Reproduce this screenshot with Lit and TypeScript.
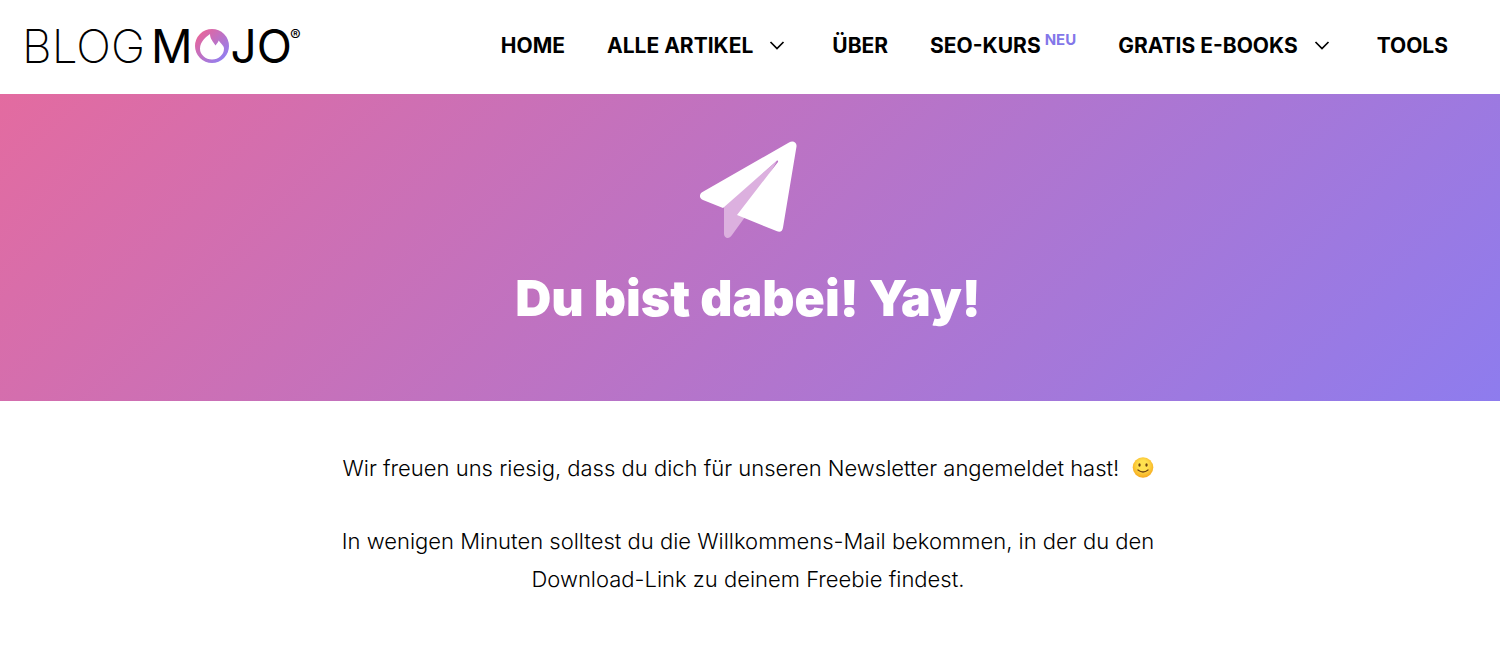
import { LitElement, html, css, svg } from "lit";
import { customElement } from "lit/decorators.js";

interface NavItem {
  label: string;
  badge?: string;
  submenu?: boolean;
}

const NAV: NavItem[] = [
  { label: "HOME" },
  { label: "ALLE ARTIKEL", submenu: true },
  { label: "ÜBER" },
  { label: "SEO-KURS", badge: "NEU" },
  { label: "GRATIS E-BOOKS", submenu: true },
  { label: "TOOLS" },
];

const chevron = html`<svg class="chevron" viewBox="0 0 16 16" aria-hidden="true">
  <path d="M1.500 4 8 10.500 14.500 4" fill="none" stroke="currentColor" stroke-width="1.700" />
</svg>`;

const flame = svg`
  <defs>
    <linearGradient id="flame" x1="0" y1="0" x2="1" y2="1">
      <stop offset="0.100" stop-color="#ea6498" />
      <stop offset="0.900" stop-color="#8f80f4" />
    </linearGradient>
  </defs>
  <path fill="url(#flame)" fill-rule="evenodd"
    d="M17 0a17 17 0 1 1 0 34a17 17 0 1 1 0-34Z
       M15 5C11 8 5 12.500 5 19.500a12 11 0 0 0 24 0C29 17 26 14.500 23.500 11.500C23.500 13 22 14.500 20.500 16.500C18.500 13 15 10 15 5Z" />`;

@customElement("app-root")
export class AppRoot extends LitElement {
  static styles = css`
    :host {
      display: block;
      min-height: 100vh;
      background: #fff;
      color: #000;
      font-family: Inter, "Liberation Sans", sans-serif;
    }
    a {
      color: inherit;
      text-decoration: none;
    }
    .header {
      display: flex;
      align-items: center;
      justify-content: space-between;
      min-height: 94px;
      box-sizing: border-box;
      padding: 0 52px 2px 22px;
    }
    .logo {
      display: flex;
      align-items: center;
      font-size: 46px;
      line-height: 48px;
    }
    .light {
      margin-right: 6px;
      font-weight: 200;
    }
    .medium {
      font-weight: 400;
    }
    .flame {
      width: 34px;
      height: 34px;
      margin: 0 2px;
    }
    .mark {
      align-self: flex-start;
      margin-left: -2px;
      font-size: 16px;
      line-height: 26px;
    }
    .nav {
      display: flex;
      align-items: center;
      gap: 42px;
      font-size: 21px;
      font-weight: 700;
      line-height: 24px;
      white-space: nowrap;
    }
    .item {
      display: flex;
      align-items: center;
    }
    .badge {
      align-self: flex-start;
      margin-left: 4px;
      color: #8377e9;
      font-size: 15px;
      line-height: 12px;
    }
    .chevron {
      width: 16px;
      height: 16px;
      margin: 0 5px 0 16px;
    }
    .hero {
      display: flex;
      flex-direction: column;
      align-items: center;
      padding: 46px 28px 71px 24px;
      background: linear-gradient(135deg, #e36ba0, #8e7cee);
      color: #fff;
    }
    .plane {
      width: 100px;
      height: 100px;
    }
    .title {
      margin: 27px 0 0;
      font-size: 50px;
      font-weight: 900;
      line-height: 63px;
      text-align: center;
    }
    .content {
      padding: 48px 28px 48px 24px;
      font-size: 22px;
      font-weight: 300;
      line-height: 38px;
      text-align: center;
    }
    .content p {
      max-width: 840px;
      margin: 0 auto 35px;
    }
    .smiley {
      width: 22px;
      height: 22px;
      margin-left: 6px;
      vertical-align: -3px;
    }
  `;

  render() {
    return html`
      <header class="header">
        <a class="logo" href="#" aria-label="Blogmojo">
          <span class="light">BLOG</span><span class="medium">M</span>
          <svg class="flame" viewBox="0 0 34 34" aria-hidden="true">${flame}</svg>
          <span class="medium">JO</span><span class="mark">®</span>
        </a>
        <nav class="nav">
          ${NAV.map(
            (item) => html`<a class="item" href="#"
              >${item.label}${item.badge
                ? html`<span class="badge">${item.badge}</span>`
                : ""}${item.submenu ? chevron : ""}</a
            >`
          )}
        </nav>
      </header>
      <main>
        <section class="hero">
          <svg class="plane" viewBox="0 0 100 100" aria-hidden="true">
            <path
              fill="#dcb0df"
              d="M26 66 79 21 47 77 34 95c-3 5-8 3-8-1Z"
            />
            <path
              fill="#fff"
              d="M91 2.500c4-2.500 8 0 7.500 4L85 87.500c-.5 4-3 5-6.500 3.500L39 75 80 22c.5-1-.5-2-1.500-1L25 68 5 60c-4-1.500-4-6-.5-8Z"
            />
          </svg>
          <h1 class="title">Du bist dabei! Yay!</h1>
        </section>
        <section class="content">
          <p>
            Wir freuen uns riesig, dass du dich für unseren Newsletter angemeldet hast!
            <svg class="smiley" viewBox="0 0 22 22" role="img" aria-label="Lächeln">
              <defs>
                <radialGradient id="face" cx="0.500" cy="0.400" r="0.600">
                  <stop offset="0.400" stop-color="#ffe14f" />
                  <stop offset="1" stop-color="#f6a81c" />
                </radialGradient>
              </defs>
              <circle cx="11" cy="10.500" r="10.300" fill="url(#face)" />
              <ellipse cx="7.500" cy="8" rx="1.200" ry="1.700" fill="#704411" />
              <ellipse cx="14.500" cy="8" rx="1.200" ry="1.700" fill="#704411" />
              <path d="M6 13q5 4 10 0" fill="none" stroke="#704411" stroke-width="1.300" stroke-linecap="round" />
            </svg>
          </p>
          <p>
            In wenigen Minuten solltest du die Willkommens-Mail bekommen, in der du den
            Download-Link zu deinem Freebie findest.
          </p>
        </section>
      </main>
    `;
  }
}
